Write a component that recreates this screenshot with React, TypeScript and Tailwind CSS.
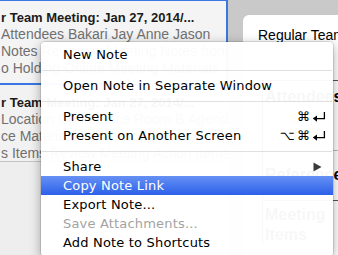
import React from 'react';

type MenuEntry =
  | { kind: 'sep' }
  | {
      kind: 'item';
      label: string;
      shortcut?: 'cmd' | 'optcmd';
      submenu?: boolean;
      active?: boolean;
      disabled?: boolean;
    };

const menuEntries: MenuEntry[] = [
  { kind: 'item', label: 'New Note' },
  { kind: 'sep' },
  { kind: 'item', label: 'Open Note in Separate Window' },
  { kind: 'sep' },
  { kind: 'item', label: 'Present', shortcut: 'cmd' },
  { kind: 'item', label: 'Present on Another Screen', shortcut: 'optcmd' },
  { kind: 'sep' },
  { kind: 'item', label: 'Share', submenu: true },
  { kind: 'item', label: 'Copy Note Link', active: true },
  { kind: 'item', label: 'Export Note...' },
  { kind: 'item', label: 'Save Attachments...', disabled: true },
  { kind: 'item', label: 'Add Note to Shortcuts' },
];

const notes = [
  {
    selected: true,
    title: 'r Team Meeting: Jan 27, 2014/...',
    lines: [
      'Attendees Bakari Jay Anne Jason',
      'Notes Reviewed Meeting Notes from',
      'o Holding Online Meeting Materials',
    ],
  },
  {
    selected: false,
    title: 'r Team Meeting: Jan 27, 2014/...',
    lines: [
      'Location Conference Room B Agenda',
      'ce Materials Reference Documents',
      's Items Review Meeting Action Items',
    ],
  },
];

function ReturnGlyph() {
  return (
    <svg width="14" height="11" viewBox="0 0 14 11" className="shrink-0">
      <path d="M12.4 1 V7.6 H4" fill="none" stroke="currentColor" strokeWidth="1.3" />
      <path d="M0.8 7.6 L5 4.4 L5 10.8 Z" fill="currentColor" />
    </svg>
  );
}

function Shortcut({ type }: { type: 'cmd' | 'optcmd' }) {
  return (
    <span className="flex items-center gap-[2px] text-[13px] leading-none">
      {type === 'optcmd' && <span>⌥</span>}
      <span>⌘</span>
      <ReturnGlyph />
    </span>
  );
}

function ContextMenu() {
  return (
    <div
      className="absolute left-[41px] top-[42px] w-[292px] rounded-[4px] bg-white/[0.97] pb-[4px] pt-[3px] text-[13px] tracking-[0.18px] text-black shadow-[0_3px_12px_rgba(0,0,0,0.35)] ring-1 ring-black/10"
      style={{ fontFamily: '"DejaVu Sans", sans-serif' }}
    >
      {menuEntries.map((entry, i) =>
        entry.kind === 'sep' ? (
          <div key={i} className="flex h-[12px] items-center px-px">
            <div className="h-px w-full bg-[#e0e0e0]" />
          </div>
        ) : (
          <div
            key={i}
            className={
              'flex h-[19px] items-center justify-between pl-[22px] pr-[7px] ' +
              (entry.active
                ? 'bg-gradient-to-b from-[#6690f4] to-[#2c60e9] text-white'
                : entry.disabled
                  ? 'text-[#a3a3a3]'
                  : 'text-black')
            }
          >
            <span>{entry.label}</span>
            {entry.shortcut && <Shortcut type={entry.shortcut} />}
            {entry.submenu && (
              <svg width="9" height="10" viewBox="0 0 9 10" className="mr-[4px]">
                <path d="M0.5 0.5 L8.5 5 L0.5 9.5 Z" fill="#3a3a3a" />
              </svg>
            )}
          </div>
        ),
      )}
    </div>
  );
}

function NoteList() {
  return (
    <div
      className="flex w-[228px] shrink-0 flex-col overflow-hidden bg-[#eeeeee] text-[14px] leading-[17px]"
      style={{ fontFamily: '"Liberation Sans", Arial, sans-serif' }}
    >
      {notes.map((note, i) =>
        note.selected ? (
          <div
            key={i}
            className="-mt-px h-[86px] border-2 border-l-0 border-[#3a77e2] bg-[#f4f4f4] pl-px pt-[8px]"
          >
            <div className="whitespace-nowrap text-[13px] font-bold text-[#1b1b1b]">{note.title}</div>
            {note.lines.map((l) => (
              <div key={l} className="whitespace-nowrap text-[#707070]">
                {l}
              </div>
            ))}
          </div>
        ) : (
          <div key={i} className="h-[77px] border-b border-[#c4c4c4] bg-[#f2f2f2] pl-px pt-[9px]">
            <div className="whitespace-nowrap text-[13px] font-bold text-[#1b1b1b]">{note.title}</div>
            {note.lines.map((l) => (
              <div key={l} className="whitespace-nowrap text-[#707070]">
                {l}
              </div>
            ))}
          </div>
        ),
      )}
    </div>
  );
}

function NotePanel() {
  return (
    <div className="flex min-w-0 flex-1 flex-col pl-[15px] pt-[15px]">
      <div
        className="flex flex-1 flex-col overflow-hidden rounded-tl-[6px] bg-white"
        style={{ fontFamily: '"Liberation Sans", Arial, sans-serif' }}
      >
        <div className="whitespace-nowrap pl-[15px] pt-[12px] text-[14px] leading-[17px] text-black">
          Regular Team Meeting
        </div>
        <div className="ml-[19px] mt-[36px] border-l border-t border-[#555] text-[16px] font-bold leading-[20px] text-black">
          <div className="h-[70px] whitespace-nowrap border-b border-[#bbb] pl-[2px] pt-[6px]">
            Attendees
          </div>
          <div className="h-[50px] whitespace-nowrap border-b border-[#555] pl-[2px] pt-[14px]">
            Reference
          </div>
          <div className="pl-[2px] pt-[4px]">
            Meeting
            <br />
            Items
          </div>
        </div>
      </div>
    </div>
  );
}

export default function App() {
  return (
    <div className="relative flex h-[255px] w-[338px] overflow-hidden bg-[#c9c9c9]">
      <NoteList />
      <NotePanel />
      <ContextMenu />
    </div>
  );
}
